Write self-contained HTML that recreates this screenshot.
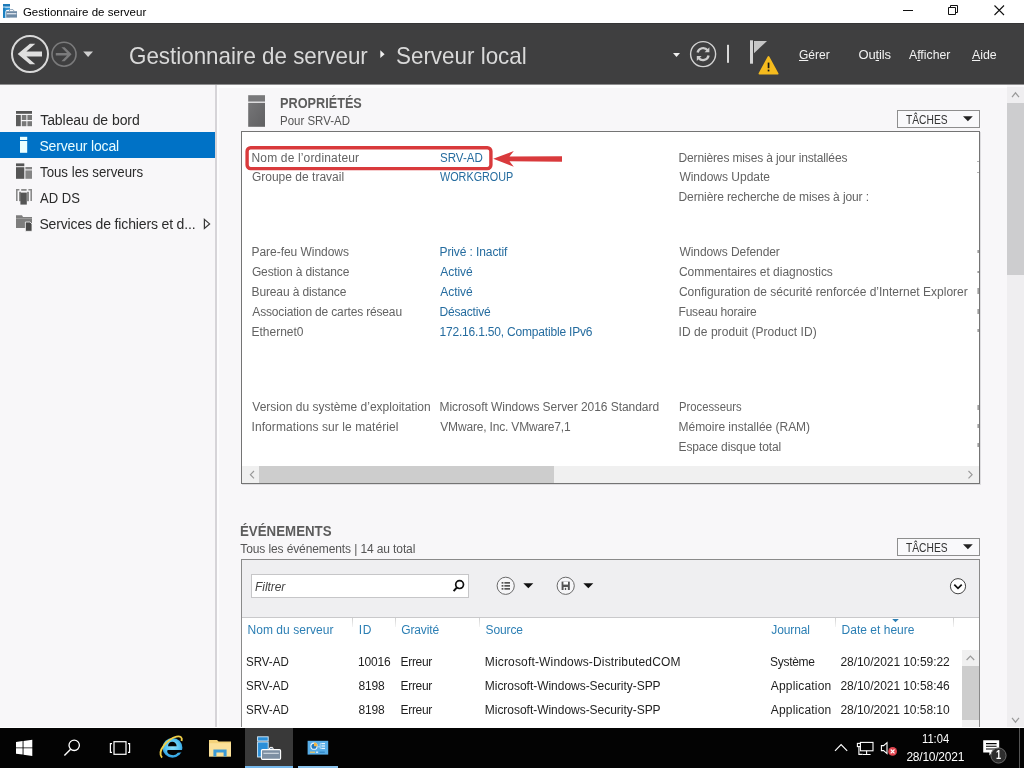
<!DOCTYPE html>
<html lang="fr">
<head>
<meta charset="utf-8">
<title>Gestionnaire de serveur</title>
<style>
html,body{margin:0;padding:0;}
body{width:1024px;height:768px;overflow:hidden;position:relative;background:#f8f7f9;font-family:"Liberation Sans",sans-serif;}
.a{position:absolute;}
.t{position:absolute;white-space:pre;line-height:1;font-family:"Liberation Sans",sans-serif;}
.t u{text-decoration:underline;text-underline-offset:1px;}
#titlebar{left:0;top:0;width:1024px;height:23px;background:#fff;}
#header{left:0;top:23px;width:1024px;height:60px;background:#3f3f40;border-top:1px solid #353536;border-bottom:1px solid #8e8e8f;box-sizing:content-box;}
#sidebar{left:0;top:85px;width:215px;height:643px;background:#f8f7f9;border-right:2px solid #d6d4d8;}
#sel{left:0;top:132px;width:215px;height:26px;background:#0072c6;}
#props{left:241px;top:131px;width:737px;height:351px;background:#fff;border:1px solid #747474;box-sizing:content-box;box-shadow:1px 1px 0 #dedde0;}
#hscroll{left:242px;top:466px;width:737px;height:17px;background:#f0f0f0;}
#hthumb{left:259px;top:466px;width:295px;height:17px;background:#cdcdcd;}
#vscroll{left:1007px;top:87px;width:17px;height:640px;background:#efeef0;}
#vthumb{left:1007px;top:103px;width:17px;height:172px;background:#cdcdcf;}
.btn{width:81px;height:16px;border:1px solid #8e8e8e;background:#f9f9fb;box-sizing:content-box;}
#events{left:241px;top:559px;width:737px;height:170px;background:#fff;border:1px solid #8a8a8a;border-bottom:none;}
#toolbar{left:242px;top:560px;width:737px;height:58px;background:#efeff1;border-bottom:1px solid #c9c9cb;box-sizing:border-box;}
#filter{left:251px;top:574px;width:218px;height:24px;background:#fff;border:1px solid #c6c6c8;box-sizing:border-box;}
.cs{width:1px;height:9px;background:linear-gradient(#d0d0d0,#f4f4f4);top:618px;}
#iscroll{left:962px;top:650px;width:17px;height:78px;background:#f0f0f0;}
#ithumb{left:962px;top:666px;width:17px;height:54px;background:#cdcdcd;}
#taskbar{left:0;top:728px;width:1024px;height:40px;background:#030303;}
#tb-active{left:245px;top:728px;width:48px;height:40px;background:#393939;}
</style>
</head>
<body>
<div id="titlebar" class="a"></div>
<div id="header" class="a"></div>
<div id="sidebar" class="a"></div>
<div class="a" style="left:217px;top:85px;width:790px;height:3px;background:#fdfdfe"></div><div class="a" style="left:217px;top:85px;width:2px;height:642px;background:#fcfcfd"></div>
<div id="sel" class="a"></div>
<div id="vscroll" class="a"></div><div id="vthumb" class="a"></div>
<div id="props" class="a"></div>
<div id="hscroll" class="a"></div><div id="hthumb" class="a"></div>
<div class="a btn" style="left:897px;top:110px;"></div>
<div class="a btn" style="left:897px;top:538px;"></div>
<div id="events" class="a"></div>
<div id="toolbar" class="a"></div>
<div id="filter" class="a"></div>
<div class="a cs" style="left:352px"></div><div class="a cs" style="left:395px"></div><div class="a cs" style="left:479px"></div><div class="a cs" style="left:835px"></div><div class="a cs" style="left:953px"></div>
<div id="iscroll" class="a"></div><div id="ithumb" class="a"></div>
<div class="a" style="left:0;top:727px;width:1024px;height:1px;background:#fff"></div>
<div id="taskbar" class="a"></div>
<div id="tb-active" class="a"></div>
<svg class="a" style="left:0;top:0" width="1024" height="768" viewBox="0 0 1024 768">
<!-- title icon -->
<g id="ic-title">
<rect x="3" y="4" width="7" height="2.6" fill="#1d7ab9"/>
<rect x="3" y="7.6" width="7" height="10.2" fill="#2a93d6"/>
<rect x="3" y="7.6" width="2.2" height="10.2" fill="#1d80c0"/>
<path d="M5.4 17.8 V12 Q5.4 9.8 8 9.8 H10 V17.8Z" fill="#fff"/>
<rect x="6.2" y="11.2" width="10.8" height="6.4" fill="#6f8ba6"/>
<path d="M9 11.2 L10.2 9.6 H13 L14.2 11.2" fill="none" stroke="#8fa5ba" stroke-width="1"/>
<rect x="6.8" y="13.2" width="9.6" height="1.1" fill="#f2f6fa"/>
</g>
<!-- window controls -->
<g stroke="#111" stroke-width="1" fill="none">
<path d="M903 10.5 H913"/>
<path d="M948.5 7.5 H955.5 V14.5 H948.5Z M950.5 7.5 V5.5 H957.5 V12.5 H955.5"/>
<path d="M994.5 5.5 L1004 15 M1004 5.5 L994.5 15" stroke-width="1.1"/>
</g>
<!-- header nav -->
<circle cx="30" cy="54" r="18" fill="none" stroke="#d9d9d9" stroke-width="2"/>
<path d="M17.7 54 L29.9 43.7 H35.3 L26.4 51.6 H42 V56.5 H26.4 L35.3 64.3 H29.9Z" fill="#dedede"/>
<circle cx="64" cy="54.2" r="12" fill="none" stroke="#7b7b7c" stroke-width="1.6"/>
<path d="M71.6 54.2 L64.6 47.2 H61.4 L67 52.9 H55.8 V55.5 H67 L61.4 61.2 H64.6Z" fill="#7b7b7c"/>
<path d="M83.2 51.4 H93 L88.1 57Z" fill="#cfcfcf"/>
<path d="M380.3 50.3 L384.6 54.2 L380.3 58.1Z" fill="#f0f0f0"/>
<path d="M673 53 H680 L676.5 57Z" fill="#f0f0f0"/>
<circle cx="703.1" cy="54.1" r="12.5" fill="none" stroke="#d2d2d2" stroke-width="1.4"/>
<g fill="none" stroke="#cdcdcd" stroke-width="2.3">
<path d="M697.6 52.6 A5.7 5.7 0 0 1 707.6 50.2"/>
<path d="M708.6 55.6 A5.7 5.7 0 0 1 698.6 58"/>
</g>
<path d="M709.4 47.3 V52.2 H704.6Z" fill="#cdcdcd"/>
<path d="M696.8 60.9 V56 H701.6Z" fill="#cdcdcd"/>
<rect x="727" y="44.8" width="2" height="18" fill="#d8d8d8"/>
<rect x="750" y="40.3" width="3" height="23.4" fill="#d3d3d3"/>
<path d="M754 41 H767 L754 53.2Z" fill="#c6c6c6"/>
<path d="M768.5 57 L777.6 73.6 H759.4Z" fill="#f5bb1e" stroke="#f5bb1e" stroke-width="1.8" stroke-linejoin="round"/>
<rect x="767.7" y="62.6" width="1.7" height="5.6" fill="#151515"/>
<rect x="767.7" y="69.6" width="1.7" height="1.8" fill="#151515"/>
<!-- sidebar icons -->
<g id="ic-dash">
<rect x="16" y="111" width="16" height="2.8" fill="#555"/>
<rect x="16" y="115" width="4.8" height="11.2" fill="#5c5c5c"/>
<rect x="21.8" y="115" width="4.6" height="5" fill="#787878"/><rect x="27.4" y="115" width="4.6" height="5" fill="#787878"/>
<rect x="21.8" y="121.2" width="4.6" height="5" fill="#787878"/><rect x="27.4" y="121.2" width="4.6" height="5" fill="#787878"/>
</g>
<g id="ic-local" fill="#eaffff">
<rect x="20" y="136.8" width="7.2" height="3.2"/><rect x="20" y="141" width="7.2" height="11.8"/>
</g>
<g id="ic-all">
<rect x="16" y="163.4" width="8.3" height="2.8" fill="#555"/><rect x="16" y="167.2" width="8.3" height="11.6" fill="#555"/>
<rect x="25.4" y="167" width="6.6" height="2.4" fill="#858585"/><rect x="25.4" y="170.4" width="6.6" height="8.4" fill="#858585"/>
</g>
<g id="ic-adds">
<path d="M16 189 H19.4 V190.6 H17.6 V201 H16Z M28.4 189 H32 V201 H30.4 V190.6 H28.4Z" fill="#8a8a8a"/>
<rect x="21.2" y="189" width="5.4" height="1.8" fill="#8a8a8a"/>
<rect x="19" y="191.8" width="2" height="9.4" fill="#8a8a8a"/><rect x="27" y="191.8" width="2" height="9.4" fill="#8a8a8a"/>
<rect x="20.4" y="192.6" width="6.4" height="12" fill="#555"/>
</g>
<g id="ic-files">
<path d="M16 215.3 H22 L23 217 H32 V228 H16Z" fill="#7d7d7d"/>
<rect x="16" y="218" width="16" height="1" fill="#9a9a9a"/>
<path d="M25.4 222 H30 L32 224 V231.3 H25.4Z" fill="#484848" stroke="#f6f6f8" stroke-width="0.8"/>
</g>
<path d="M204.4 219.4 L209.6 223.9 L204.4 228.4Z" fill="none" stroke="#383838" stroke-width="1.25"/>
<!-- props server icon -->
<defs><linearGradient id="gsv" x1="0" y1="0" x2="1" y2="1"><stop offset="0" stop-color="#757577"/><stop offset="1" stop-color="#606062"/></linearGradient></defs>
<rect x="248.2" y="95.2" width="16.8" height="6.4" fill="#79797b"/>
<rect x="248.2" y="102.8" width="16.8" height="24" fill="url(#gsv)"/>
<!-- red highlight -->
<rect x="247.1" y="147.8" width="243.8" height="20.8" rx="3.5" fill="none" stroke="#d93a3c" stroke-width="3.4"/>
<path d="M493.2 158.8 L513.8 151 L509.5 156.6 L562 156.2 V161.8 L509.5 161.2 L513.8 166.8Z" fill="#d93a3c"/>
<rect x="977.2" y="161" width="1.6" height="1" fill="#a0a0a0"/><rect x="977.2" y="172" width="1.6" height="1" fill="#a0a0a0"/><rect x="977.4" y="250" width="1.6" height="3" fill="#a0a0a0"/><rect x="977.4" y="271" width="1.6" height="2" fill="#a0a0a0"/><rect x="977.4" y="288" width="1.6" height="6" fill="#a0a0a0"/><rect x="977.4" y="309" width="1.6" height="5" fill="#a0a0a0"/><rect x="977.4" y="329" width="1.6" height="3" fill="#a0a0a0"/><rect x="977.4" y="405" width="1.6" height="5" fill="#a0a0a0"/><rect x="977.4" y="424" width="1.6" height="4" fill="#a0a0a0"/><rect x="977.4" y="443" width="1.6" height="4" fill="#a0a0a0"/>
<!-- taches arrows -->
<path d="M963 116.3 H972.8 L967.9 121.3Z" fill="#222"/>
<path d="M963 544.3 H972.8 L967.9 549.3Z" fill="#222"/>
<!-- scroll chevrons -->
<g fill="none" stroke="#9a9a9a" stroke-width="1.2">
<path d="M1012 97.2 L1015.5 92.8 L1019 97.2"/>
<path d="M1012 717.8 L1015.5 722.2 L1019 717.8"/>
<path d="M254 471 L250.4 474.7 L254 478.4"/>
<path d="M968.5 471 L972.1 474.7 L968.5 478.4"/>
<path d="M966.6 660 L970.4 656.2 L974.2 660"/>
</g>
<!-- events toolbar icons -->
<circle cx="459.6" cy="584.6" r="3.9" fill="none" stroke="#111" stroke-width="1.7"/>
<path d="M457 587.4 L453.6 591.2" stroke="#111" stroke-width="2" fill="none"/>
<circle cx="505.7" cy="585.8" r="8.6" fill="#f6f6f8" stroke="#6a6a6a" stroke-width="1"/>
<g fill="#555"><rect x="501.6" y="582" width="1.8" height="1.7"/><rect x="504.4" y="582" width="5.6" height="1.7"/>
<rect x="501.6" y="585" width="1.8" height="1.7"/><rect x="504.4" y="585" width="5.6" height="1.7"/>
<rect x="501.6" y="588" width="1.8" height="1.7"/><rect x="504.4" y="588" width="5.6" height="1.7"/></g>
<path d="M523.3 583.3 H533.3 L528.3 588.2Z" fill="#111"/>
<circle cx="565.7" cy="585.8" r="8.6" fill="#f6f6f8" stroke="#6a6a6a" stroke-width="1"/>
<path d="M561.6 581.6 H569.8 V590 H561.6Z" fill="#555"/><rect x="563.4" y="581.6" width="4.6" height="3" fill="#fff"/><rect x="563.6" y="587" width="4.2" height="3" fill="#fff"/><rect x="564.8" y="587.8" width="1.4" height="2.2" fill="#555"/>
<path d="M583.3 583.3 H593.3 L588.3 588.2Z" fill="#111"/>
<circle cx="958" cy="586.2" r="7.6" fill="#fff" stroke="#444" stroke-width="1"/>
<path d="M954.3 584.6 L958 588.3 L961.7 584.6" fill="none" stroke="#111" stroke-width="1.7"/>
<path d="M892.2 619 H898.8 L895.5 622.3Z" fill="#2c7fb4"/>
<!-- taskbar -->
<g fill="#fff">
<path d="M16 742 L22.6 741.1 V747.4 H16Z M23.5 741 L32.3 739.7 V747.4 H23.5Z M16 748.3 H22.6 V754.6 L16 753.7Z M23.5 748.3 H32.3 V756 L23.5 754.7Z"/>
</g>
<circle cx="74.2" cy="745.3" r="5.2" fill="none" stroke="#fff" stroke-width="1.3"/>
<path d="M70.6 749.2 L64.4 755.4" stroke="#fff" stroke-width="1.4" fill="none"/>
<rect x="114" y="741.7" width="12" height="12.6" fill="none" stroke="#fff" stroke-width="1.2"/>
<path d="M112 743.6 H110.4 V752.4 H112 M128 743.6 H129.6 V752.4 H128" fill="none" stroke="#fff" stroke-width="1.2"/>
<!-- IE -->
<g id="ic-ie">
<defs><radialGradient id="gie" cx="0.5" cy="0.45" r="0.6"><stop offset="0" stop-color="#8fe0fa"/><stop offset="0.6" stop-color="#55c2f0"/><stop offset="1" stop-color="#1f93dc"/></radialGradient></defs>
<circle cx="172.5" cy="747.8" r="9.9" fill="url(#gie)"/>
<path d="M168 746.3 A4.3 4.5 0 0 1 176.6 746.3Z" fill="#030303"/>
<path d="M167.6 750 H183.4 V752.3 L177.8 752.8 A5.1 3.4 0 0 1 167.6 750Z" fill="#030303"/>
<path d="M162 757.6 C156.4 751 168 738.6 176.5 736.6 C180.5 735.8 182.6 737.4 181.6 740.9" fill="none" stroke="#f0cf48" stroke-width="1.9"/>
</g>
<!-- explorer -->
<path d="M209 740 H217 L218.6 741.6 H231 V756.4 H209Z" fill="#f4d37b"/>
<rect x="209" y="743.2" width="22" height="13.2" fill="#fbe19a"/>
<path d="M213.4 756.4 V749.6 H226.6 V756.4 H223.6 V752.4 H216.4 V756.4Z" fill="#3c9bd6"/>
<!-- server manager -->
<rect x="257.6" y="736.8" width="10.6" height="4.2" fill="#2b8fd8" stroke="#d6ecfb" stroke-width="0.9"/>
<rect x="257.6" y="742" width="10.6" height="15" fill="#2b8fd8" stroke="#d6ecfb" stroke-width="0.9"/>
<path d="M269.2 749.4 L270 747.4 H272.6 L273.4 749.4" fill="#7d8fa3" stroke="#fff" stroke-width="1"/>
<rect x="261.4" y="749.6" width="19.2" height="9.8" rx="1.2" fill="#7d8fa3" stroke="#fff" stroke-width="1.1"/>
<rect x="263.4" y="752.8" width="15.4" height="0.9" fill="#e8eef4"/>
<rect x="245" y="766" width="48" height="2" fill="#76b9ed"/>
<!-- other app -->
<rect x="307.6" y="740.8" width="20.6" height="13.8" fill="#58aee8"/>
<circle cx="314" cy="746.2" r="3.1" fill="#1f78be" stroke="#eaf5fd" stroke-width="1.1"/><path d="M314 746.2 V742.6 A3.6 3.6 0 0 1 317.6 746.2Z" fill="#f2b544"/>
<rect x="321.4" y="743" width="3.6" height="1.2" fill="#e8f5fd"/><rect x="321.4" y="745.4" width="3.6" height="1.2" fill="#e8f5fd"/><rect x="321.4" y="747.8" width="3.6" height="1.2" fill="#e8f5fd"/>
<path d="M318 746.8 H320.2 V743.6 H321.4 M320.2 746.8 V748.4 H321.4" fill="none" stroke="#cfe9fa" stroke-width="0.7"/>
<rect x="310" y="751.6" width="5" height="1.2" fill="#f0c860"/><rect x="316" y="751.6" width="2" height="1.2" fill="#e8f5fd"/><rect x="319.4" y="751.6" width="5.4" height="1.2" fill="#2f86c8"/>
<rect x="298" y="766" width="40" height="2" fill="#8cc4ee"/>
<!-- tray -->
<path d="M835 750.8 L841.1 744.7 L847.2 750.8" fill="none" stroke="#fff" stroke-width="1.2"/>
<g fill="none" stroke="#fff" stroke-width="1.1">
<rect x="860.4" y="742.4" width="12.6" height="8.4"/><path d="M866.6 750.8 V754.4 M862.6 754.5 H870.6"/>
<rect x="857.4" y="743.4" width="3" height="3.2" fill="#030303"/><path d="M858.9 746.6 V754.4 H862.6"/>
<path d="M881.4 745.6 H883.6 L887 742.6 V753.6 L883.6 750.6 H881.4Z"/>
</g>
<circle cx="892.6" cy="751.4" r="4.4" fill="#e0454f"/>
<path d="M890.7 749.5 L894.5 753.3 M894.5 749.5 L890.7 753.3" stroke="#fff" stroke-width="1.1"/>
<path d="M983.2 740.2 H999.2 V752.4 H992.6 L989.4 755.6 V752.4 H983.2Z" fill="#fff"/>
<g stroke="#030303" stroke-width="1.1"><path d="M986 743.6 H996.6 M986 746.3 H996.6 M986 749 H996.6"/></g>
<circle cx="998.5" cy="755.5" r="7.6" fill="#2e2e2e" stroke="#6c6c6c" stroke-width="1"/>
<rect x="1019" y="728" width="1" height="40" fill="#555"/>
</svg>

<div id="texts" class="a" style="left:0;top:0;width:1024px;height:768px;will-change:transform;">
<span class="t" style="left:22.9px;top:7px;font-size:11.5px;letter-spacing:0.03px;color:#000;">Gestionnaire de serveur</span>
<span class="t" style="left:129.4px;top:44px;font-size:24px;letter-spacing:0.00px;color:#d9d9d9;transform:scaleX(0.9323);transform-origin:0 0;">Gestionnaire de serveur</span>
<span class="t" style="left:396.2px;top:44px;font-size:24px;letter-spacing:0.00px;color:#d9d9d9;transform:scaleX(0.9333);transform-origin:0 0;">Serveur local</span>
<span class="t" style="left:799.1px;top:48px;font-size:13px;letter-spacing:0.00px;color:#f2f2f2;transform:scaleX(0.9219);transform-origin:0 0;"><u>G</u>érer</span>
<span class="t" style="left:858.5px;top:48px;font-size:13px;letter-spacing:-0.15px;color:#f2f2f2;">Ou<u>t</u>ils</span>
<span class="t" style="left:908.8px;top:48px;font-size:13px;letter-spacing:0.00px;color:#f2f2f2;transform:scaleX(0.9427);transform-origin:0 0;">A<u>f</u>ficher</span>
<span class="t" style="left:971.8px;top:48px;font-size:13px;letter-spacing:0.00px;color:#f2f2f2;transform:scaleX(0.9513);transform-origin:0 0;"><u>A</u>ide</span>
<span class="t" style="left:40.2px;top:113px;font-size:14px;letter-spacing:-0.06px;color:#2b2b2b;">Tableau de bord</span>
<span class="t" style="left:39.4px;top:139px;font-size:14px;letter-spacing:-0.16px;color:#eafdff;">Serveur local</span>
<span class="t" style="left:40.3px;top:165px;font-size:14px;letter-spacing:0.00px;color:#2b2b2b;transform:scaleX(0.9469);transform-origin:0 0;">Tous les serveurs</span>
<span class="t" style="left:40.3px;top:191px;font-size:14px;letter-spacing:0.00px;color:#2b2b2b;transform:scaleX(0.9323);transform-origin:0 0;">AD DS</span>
<span class="t" style="left:39.4px;top:217px;font-size:14px;letter-spacing:-0.15px;color:#2b2b2b;">Services de fichiers et d...</span>
<span class="t" style="left:279.6px;top:96px;font-size:14px;letter-spacing:0.00px;color:#5c5c5c;font-weight:bold;transform:scaleX(0.9067);transform-origin:0 0;">PROPRIÉTÉS</span>
<span class="t" style="left:279.5px;top:115px;font-size:12px;letter-spacing:0.00px;color:#555;transform:scaleX(0.9566);transform-origin:0 0;">Pour SRV-AD</span>
<span class="t" style="left:906.2px;top:114px;font-size:12px;letter-spacing:0.00px;color:#333;transform:scaleX(0.8536);transform-origin:0 0;">TÂCHES</span>
<span class="t" style="left:251.5px;top:152px;font-size:12px;letter-spacing:0.16px;color:#636363;">Nom de l’ordinateur</span>
<span class="t" style="left:251.9px;top:171px;font-size:12px;letter-spacing:0.01px;color:#636363;">Groupe de travail</span>
<span class="t" style="left:251.5px;top:246px;font-size:12px;letter-spacing:-0.04px;color:#636363;">Pare-feu Windows</span>
<span class="t" style="left:251.9px;top:266px;font-size:12px;letter-spacing:-0.11px;color:#636363;">Gestion à distance</span>
<span class="t" style="left:251.5px;top:286px;font-size:12px;letter-spacing:-0.12px;color:#636363;">Bureau à distance</span>
<span class="t" style="left:252.3px;top:306px;font-size:12px;letter-spacing:-0.16px;color:#636363;">Association de cartes réseau</span>
<span class="t" style="left:251.5px;top:326px;font-size:12px;letter-spacing:0.00px;color:#636363;">Ethernet0</span>
<span class="t" style="left:252.3px;top:401px;font-size:12px;letter-spacing:0.01px;color:#636363;">Version du système d’exploitation</span>
<span class="t" style="left:251.5px;top:421px;font-size:12px;letter-spacing:0.08px;color:#636363;">Informations sur le matériel</span>
<span class="t" style="left:439.5px;top:152px;font-size:12px;letter-spacing:0.00px;color:#256c9f;transform:scaleX(0.9633);transform-origin:0 0;">SRV-AD</span>
<span class="t" style="left:440.4px;top:171px;font-size:12px;letter-spacing:0.00px;color:#256c9f;transform:scaleX(0.9009);transform-origin:0 0;">WORKGROUP</span>
<span class="t" style="left:439.5px;top:246px;font-size:12px;letter-spacing:-0.10px;color:#256c9f;">Privé : Inactif</span>
<span class="t" style="left:440.3px;top:266px;font-size:12px;letter-spacing:-0.07px;color:#256c9f;">Activé</span>
<span class="t" style="left:440.3px;top:286px;font-size:12px;letter-spacing:-0.07px;color:#256c9f;">Activé</span>
<span class="t" style="left:439.5px;top:306px;font-size:12px;letter-spacing:-0.19px;color:#256c9f;">Désactivé</span>
<span class="t" style="left:439.5px;top:326px;font-size:12px;letter-spacing:-0.19px;color:#256c9f;">172.16.1.50, Compatible IPv6</span>
<span class="t" style="left:439.5px;top:401px;font-size:12px;letter-spacing:-0.05px;color:#636363;">Microsoft Windows Server 2016 Standard</span>
<span class="t" style="left:440.3px;top:421px;font-size:12px;letter-spacing:-0.18px;color:#636363;">VMware, Inc. VMware7,1</span>
<span class="t" style="left:678.5px;top:152px;font-size:12px;letter-spacing:-0.14px;color:#636363;">Dernières mises à jour installées</span>
<span class="t" style="left:679.4px;top:171px;font-size:12px;letter-spacing:-0.01px;color:#636363;">Windows Update</span>
<span class="t" style="left:678.5px;top:191px;font-size:12px;letter-spacing:-0.10px;color:#636363;">Dernière recherche de mises à jour :</span>
<span class="t" style="left:679.4px;top:246px;font-size:12px;letter-spacing:-0.06px;color:#636363;">Windows Defender</span>
<span class="t" style="left:678.9px;top:266px;font-size:12px;letter-spacing:-0.03px;color:#636363;">Commentaires et diagnostics</span>
<span class="t" style="left:678.9px;top:286px;font-size:12px;letter-spacing:0.00px;color:#636363;">Configuration de sécurité renforcée d’Internet Explorer</span>
<span class="t" style="left:678.5px;top:306px;font-size:12px;letter-spacing:-0.19px;color:#636363;">Fuseau horaire</span>
<span class="t" style="left:678.5px;top:326px;font-size:12px;letter-spacing:0.06px;color:#636363;">ID de produit (Product ID)</span>
<span class="t" style="left:678.6px;top:401px;font-size:12px;letter-spacing:0.00px;color:#636363;transform:scaleX(0.9387);transform-origin:0 0;">Processeurs</span>
<span class="t" style="left:678.5px;top:421px;font-size:12px;letter-spacing:-0.02px;color:#636363;">Mémoire installée (RAM)</span>
<span class="t" style="left:678.5px;top:441px;font-size:12px;letter-spacing:-0.11px;color:#636363;">Espace disque total</span>
<span class="t" style="left:239.6px;top:524px;font-size:14px;letter-spacing:0.00px;color:#5c5c5c;font-weight:bold;transform:scaleX(0.9496);transform-origin:0 0;">ÉVÉNEMENTS</span>
<span class="t" style="left:240.3px;top:543px;font-size:12px;letter-spacing:-0.11px;color:#555;">Tous les événements | 14 au total</span>
<span class="t" style="left:906.2px;top:542px;font-size:12px;letter-spacing:0.00px;color:#333;transform:scaleX(0.8536);transform-origin:0 0;">TÂCHES</span>
<span class="t" style="left:255.1px;top:581px;font-size:12px;letter-spacing:-0.08px;color:#444;font-style:italic;">Filtrer</span>
<span class="t" style="left:247.5px;top:624px;font-size:12px;letter-spacing:0.04px;color:#2c7fb4;">Nom du serveur</span>
<span class="t" style="left:358.8px;top:624px;font-size:12px;letter-spacing:0.74px;color:#2c7fb4;">ID</span>
<span class="t" style="left:401.2px;top:624px;font-size:12px;letter-spacing:-0.12px;color:#2c7fb4;">Gravité</span>
<span class="t" style="left:485.5px;top:624px;font-size:12px;letter-spacing:-0.10px;color:#2c7fb4;">Source</span>
<span class="t" style="left:771.3px;top:624px;font-size:12px;letter-spacing:-0.11px;color:#2c7fb4;">Journal</span>
<span class="t" style="left:841.5px;top:624px;font-size:12px;letter-spacing:0.02px;color:#2c7fb4;">Date et heure</span>
<span class="t" style="left:246.3px;top:656px;font-size:12px;letter-spacing:0.00px;color:#1e1e1e;transform:scaleX(0.9610);transform-origin:0 0;">SRV-AD</span>
<span class="t" style="left:358.0px;top:656px;font-size:12px;letter-spacing:-0.15px;color:#1e1e1e;">10016</span>
<span class="t" style="left:400.5px;top:656px;font-size:12px;letter-spacing:-0.30px;color:#1e1e1e;">Erreur</span>
<span class="t" style="left:484.8px;top:656px;font-size:12px;letter-spacing:0.16px;color:#1e1e1e;">Microsoft-Windows-DistributedCOM</span>
<span class="t" style="left:770.0px;top:656px;font-size:12px;letter-spacing:-0.28px;color:#1e1e1e;">Système</span>
<span class="t" style="left:840.4px;top:656px;font-size:12px;letter-spacing:-0.04px;color:#1e1e1e;">28/10/2021 10:59:22</span>
<span class="t" style="left:246.3px;top:680px;font-size:12px;letter-spacing:0.00px;color:#1e1e1e;transform:scaleX(0.9610);transform-origin:0 0;">SRV-AD</span>
<span class="t" style="left:358.5px;top:680px;font-size:12px;letter-spacing:-0.16px;color:#1e1e1e;">8198</span>
<span class="t" style="left:400.5px;top:680px;font-size:12px;letter-spacing:-0.30px;color:#1e1e1e;">Erreur</span>
<span class="t" style="left:484.8px;top:680px;font-size:12px;letter-spacing:-0.03px;color:#1e1e1e;">Microsoft-Windows-Security-SPP</span>
<span class="t" style="left:770.8px;top:680px;font-size:12px;letter-spacing:0.17px;color:#1e1e1e;">Application</span>
<span class="t" style="left:840.4px;top:680px;font-size:12px;letter-spacing:-0.04px;color:#1e1e1e;">28/10/2021 10:58:46</span>
<span class="t" style="left:246.3px;top:704px;font-size:12px;letter-spacing:0.00px;color:#1e1e1e;transform:scaleX(0.9610);transform-origin:0 0;">SRV-AD</span>
<span class="t" style="left:358.5px;top:704px;font-size:12px;letter-spacing:-0.16px;color:#1e1e1e;">8198</span>
<span class="t" style="left:400.5px;top:704px;font-size:12px;letter-spacing:-0.30px;color:#1e1e1e;">Erreur</span>
<span class="t" style="left:484.8px;top:704px;font-size:12px;letter-spacing:-0.03px;color:#1e1e1e;">Microsoft-Windows-Security-SPP</span>
<span class="t" style="left:770.8px;top:704px;font-size:12px;letter-spacing:0.17px;color:#1e1e1e;">Application</span>
<span class="t" style="left:840.4px;top:704px;font-size:12px;letter-spacing:-0.05px;color:#1e1e1e;">28/10/2021 10:58:10</span>
<span class="t" style="left:922.1px;top:733px;font-size:12px;letter-spacing:0.00px;color:#fff;transform:scaleX(0.9320);transform-origin:0 0;">11:04</span>
<span class="t" style="left:906.4px;top:751px;font-size:12px;letter-spacing:-0.23px;color:#fff;">28/10/2021</span>
<span class="t" style="left:995.8px;top:749px;font-size:12px;letter-spacing:0.00px;color:#fff;font-weight:bold;transform:scaleX(0.7600);transform-origin:0 0;">1</span>
</div>
</body>
</html>
